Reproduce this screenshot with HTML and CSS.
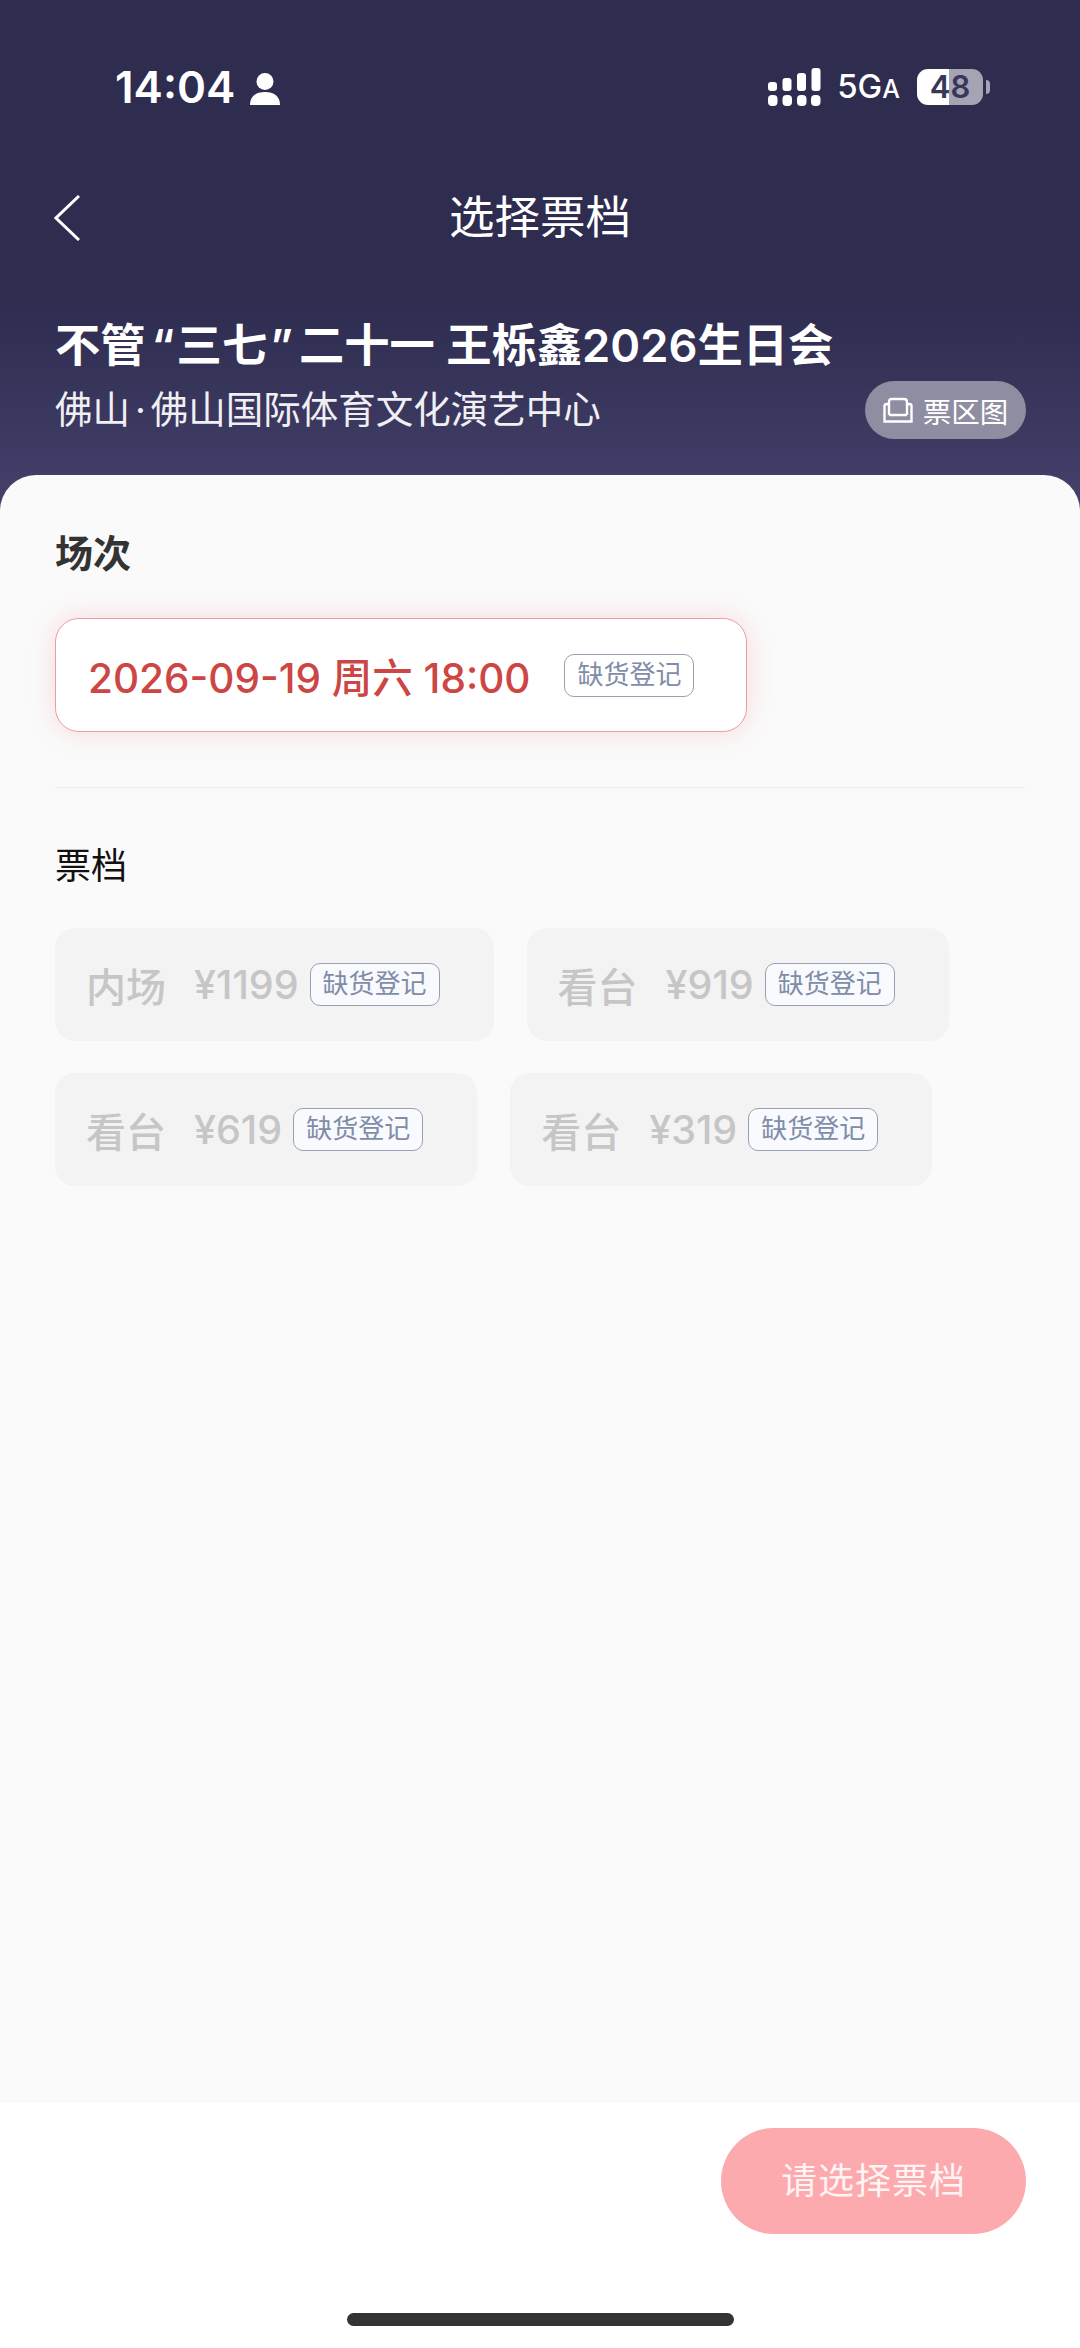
FILE: index.html
```html
<!DOCTYPE html>
<html lang="zh-CN">
<head>
  <meta charset="UTF-8" />
  <meta name="viewport" content="width=device-width, initial-scale=1.0"/>
  <link rel="stylesheet" href="styles.css">
</head>
<body>
  <header class="top">
    <div class="status-bar">
      <div class="status-left">
        <span class="time">14:04</span>
        <svg class="person" viewBox="0 0 30 32" width="30" height="32">
          <circle cx="15" cy="8.5" r="8.5" fill="#fff"/>
          <path d="M0 32 C0 23 6 19 15 19 C24 19 30 23 30 32 Z" fill="#fff"/>
        </svg>
      </div>
      <div class="status-right">
        <svg class="signal" viewBox="0 0 53 38" width="53" height="38">
          <g fill="#fff">
            <rect x="0" y="14" width="9" height="9" rx="3"/>
            <rect x="14.500" y="10" width="9" height="13" rx="3"/>
            <rect x="29" y="5" width="9" height="18" rx="3"/>
            <rect x="43.500" y="0" width="9" height="23" rx="3"/>
            <rect x="0" y="27" width="9.500" height="11" rx="4"/>
            <rect x="14.500" y="27" width="9.500" height="11" rx="4"/>
            <rect x="29" y="27" width="9.500" height="11" rx="4"/>
            <rect x="43" y="27" width="9.500" height="11" rx="4"/>
          </g>
        </svg>
        <span class="network">5G<small>A</small></span>
        <div class="battery">
          <div class="battery-body">48</div>
          <div class="battery-nub"></div>
        </div>
      </div>
    </div>

    <nav class="nav">
      <svg class="back" viewBox="0 0 26 46" width="26" height="46">
        <path d="M25 1 L2 23 L25 45" fill="none" stroke="#fff" stroke-width="3"/>
      </svg>
      <h1 class="nav-title">选择票档</h1>
    </nav>

    <div class="event">
      <h2 class="event-title">不管<span class="quote-open">“</span>三七<span class="quote-close">”</span>二十一 王栎鑫2026生日会</h2>
      <div class="event-row">
        <p class="venue">佛山<span class="dot">·</span>佛山国际体育文化演艺中心</p>
        <div class="map-btn">
          <svg viewBox="0 0 30 26" width="30" height="26">
            <path d="M6 9 V5 Q6 2 9 2 H21 Q24 2 24 5 V9 M6 18 H24 M6 18 V9 Q6 7 3.500 7 Q1.500 7 1.500 9 V24.500 H28.500 V9 Q28.500 7 26.500 7 Q24 7 24 9 V18" fill="none" stroke="#fff" stroke-width="2.400"/>
          </svg>
          <span>票区图</span>
        </div>
      </div>
    </div>
  </header>

  <main class="sheet">
    <h3 class="section-title bold">场次</h3>
    <div class="session">
      <span class="session-text">2026-09-19 周六 18:00</span>
      <span class="badge">缺货登记</span>
    </div>
    <div class="divider"></div>

    <h3 class="section-title">票档</h3>
    <div class="tickets">
      <div class="ticket">
        <span class="ticket-name">内场</span>
        <span class="ticket-price">¥1199</span>
        <span class="badge">缺货登记</span>
      </div>
      <div class="ticket">
        <span class="ticket-name">看台</span>
        <span class="ticket-price">¥919</span>
        <span class="badge">缺货登记</span>
      </div>
      <div class="ticket">
        <span class="ticket-name">看台</span>
        <span class="ticket-price">¥619</span>
        <span class="badge">缺货登记</span>
      </div>
      <div class="ticket">
        <span class="ticket-name">看台</span>
        <span class="ticket-price">¥319</span>
        <span class="badge">缺货登记</span>
      </div>
    </div>
  </main>

  <footer class="bottom">
    <div class="confirm">请选择票档</div>
    <div class="home-bar"></div>
  </footer>
</body>
</html>
```

FILE: styles.css
```css
* {
  box-sizing: border-box;
}

html, body {
  height: 100%;
}

body {
  font-family: 'Inter', 'Noto Sans CJK SC', sans-serif;
  margin: 0;
  padding: 0;
  display: flex;
  flex-direction: column;
  background-color: #fff;
  overflow: hidden;
}

h1, h2, h3, p {
  margin: 0;
  font-weight: 400;
}

/* header */
.top {
  height: 511px;
  flex-shrink: 0;
  padding-top: 68px;
  background: linear-gradient(#2e2c4f 0, #2e2c4f 300px, #45416c 511px);
  color: #fff;
}

.status-bar {
  height: 38px;
  padding: 0 90px 0 115px;
  display: flex;
  justify-content: space-between;
  align-items: center;
}

.status-left {
  display: flex;
  align-items: center;
  gap: 15px;
}

.time {
  font-size: 44px;
  font-weight: 600;
  line-height: 38px;
}

.person {
  margin-top: 4px;
}

.status-right {
  display: flex;
  align-items: center;
}

.network {
  margin-left: 16px;
  font-size: 33px;
  font-weight: 500;
  line-height: 38px;
}

.network small {
  font-size: 25px;
}

.battery {
  margin-left: 17px;
  display: flex;
  align-items: center;
  gap: 3px;
}

.battery-body {
  width: 66px;
  height: 36px;
  border-radius: 11px;
  background: linear-gradient(90deg, #fff 0, #fff 32px, #a5a4b3 32px);
  color: #38375a;
  font-size: 31px;
  font-weight: 600;
  line-height: 36px;
  text-align: center;
}

.battery-nub {
  width: 4px;
  height: 14px;
  border-radius: 0 4px 4px 0;
  background-color: #a5a4b3;
}

.nav {
  margin-top: 89px;
  height: 46px;
  display: flex;
  align-items: center;
  justify-content: center;
  position: relative;
}

.back {
  position: absolute;
  left: 54px;
  top: 0;
}

.nav-title {
  font-size: 45.500px;
  line-height: 46px;
}

.event {
  margin-top: 80px;
  padding: 0 54px 0 55px;
}

.event-title {
  font-size: 45.300px;
  font-weight: 600;
  line-height: 50px;
  white-space: nowrap;
}

.quote-open {
  margin: 0 2px 0 6px;
}

.quote-close {
  margin: 0 6px 0 3px;
}

.event-row {
  display: flex;
  justify-content: space-between;
  align-items: center;
  margin-top: 10px;
}

.venue {
  font-size: 37.500px;
  line-height: 58px;
  color: #f0f0f4;
}

.dot {
  margin: 0 5px;
}

.map-btn {
  width: 161px;
  height: 58px;
  border-radius: 29px;
  background-color: #8e8da2;
  display: flex;
  align-items: center;
  justify-content: center;
  gap: 10px;
  font-size: 28.500px;
}

/* sheet */
.sheet {
  flex: 1;
  margin-top: -36px;
  padding: 0 55px;
  border-radius: 36px 36px 0 0;
  background-color: #fafafa;
  position: relative;
}

.section-title {
  font-size: 36px;
  line-height: 44px;
  color: #111;
}

.section-title.bold {
  margin-top: 56px;
  font-size: 38px;
  font-weight: 700;
  color: #333;
}

.session {
  width: 692px;
  height: 114px;
  margin-top: 43px;
  padding: 0 32px;
  display: flex;
  align-items: center;
  gap: 34px;
  background-color: #fff;
  border: 1.500px solid #e8a09e;
  border-radius: 24px;
  box-shadow: 0 0 26px rgba(240, 90, 90, 0.2);
}

.session-text {
  font-size: 40.500px;
  font-weight: 500;
  color: #cd4643;
  white-space: nowrap;
}

.badge {
  width: 130px;
  height: 43px;
  flex-shrink: 0;
  border: 1.500px solid #98a1b3;
  border-radius: 10px;
  background-color: #f8fafd;
  color: #7f8da8;
  font-size: 26px;
  line-height: 40px;
  text-align: center;
}

.session .badge {
  background-color: #fff;
}

.divider {
  height: 1px;
  margin: 55px 0 56px;
  background-color: #ececec;
}

.tickets {
  display: flex;
  flex-wrap: wrap;
  gap: 32px 33px;
  margin-top: 40px;
}

.ticket {
  height: 113px;
  padding: 0 54px 0 31px;
  display: flex;
  align-items: center;
  border-radius: 20px;
  background-color: #f3f3f4;
  color: #c6c6c6;
}

.ticket-name {
  font-size: 40px;
  font-weight: 500;
  margin-right: 28px;
}

.ticket-price {
  font-size: 39.500px;
  font-weight: 500;
  margin-right: 11px;
}

/* footer */
.bottom {
  height: 245px;
  flex-shrink: 0;
  padding: 25px 54px 0;
  display: flex;
  flex-direction: column;
  align-items: flex-end;
  background-color: #fff;
  position: relative;
}

.confirm {
  width: 305px;
  height: 106px;
  border-radius: 53px;
  background-color: #fdaaae;
  color: #fff4f4;
  font-size: 36px;
  letter-spacing: 1px;
  line-height: 106px;
  text-align: center;
}

.home-bar {
  position: absolute;
  left: 347px;
  top: 210px;
  width: 387px;
  height: 13px;
  border-radius: 7px;
  background-color: #333;
}
```
